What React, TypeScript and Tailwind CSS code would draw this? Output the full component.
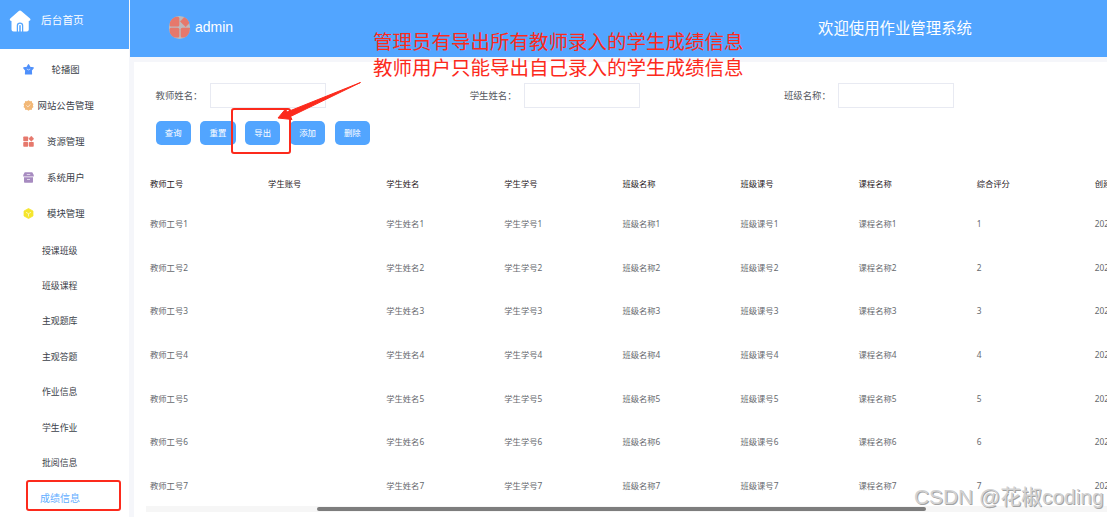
import { type FC, type ReactNode } from 'react';

const columns = ['教师工号', '学生账号', '学生姓名', '学生学号', '班级名称', '班级课号', '课程名称', '综合评分', '创建时间'];

const rows = [1, 2, 3, 4, 5, 6, 7];

const subMenus = ['授课班级', '班级课程', '主观题库', '主观答题', '作业信息', '学生作业', '批阅信息'];

const StarIcon: FC = () => (
  <svg viewBox="0 0 22 22" className="w-[11px] h-[11px]">
    <path d="M11 1.5l3 5 6.5 1.3-4 5 .5 7H5l.5-7-4-5L8 6.5z" fill="#4f90fb" stroke="#4f90fb" strokeWidth="2.5" strokeLinejoin="round" />
    <path d="M7.5 10q3.5 3.500 7 0" fill="none" stroke="#fff" strokeOpacity=".8" strokeWidth="1.5" />
  </svg>
);

const BadgeIcon: FC = () => (
  <svg viewBox="0 0 22 22" className="w-[11px] h-[11px]">
    <path d="M11 .5l3 2 3.5-.3.8 3.5 2.700 2.200L19.700 11l1.300 3.200-2.800 2.100-.8 3.500-3.500-.3-2.900 2-2.900-2-3.500.3-.8-3.500L1 14.200 2.300 11 1 7.900l2.700-2.200.8-3.500 3.500.3z" fill="#f2b877" />
    <path d="M6.800 10.800l3 3 5.200-5.200" fill="none" stroke="#fff" strokeOpacity=".8" strokeWidth="1.6" />
  </svg>
);

const GridIcon: FC<{ className?: string }> = ({ className = 'w-[11px] h-[11px]' }) => (
  <svg viewBox="0 0 22 22" className={className} fill="#e6786c">
    <rect x="0.5" y="0.8" width="9.8" height="9.6" rx="1.5" />
    <rect x="0.5" y="11.8" width="9.8" height="9.6" rx="1.5" />
    <rect x="11.7" y="11.8" width="9.8" height="9.6" rx="1.5" />
    <path d="M16.6 0l5.2 5.4-5.2 5.4-5.2-5.4z" stroke="#e6786c" strokeWidth=".6" strokeLinejoin="round" />
  </svg>
);

const BoxIcon: FC = () => (
  <svg viewBox="0 0 22 22" className="w-[11px] h-[11px]">
    <path d="M3.5.5h15L21.5 6v3H.5V6z" fill="#a78bc0" />
    <path d="M2 10.3h18V20q0 1.5-1.5 1.5h-15Q2 21.5 2 20z" fill="#a78bc0" />
    <path d="M7.5 5h7M8 15h6" stroke="#fff" strokeOpacity=".85" strokeWidth="1.5" />
  </svg>
);

const CubeIcon: FC = () => (
  <svg viewBox="0 0 22 22" className="w-[11px] h-[11px]">
    <path d="M11 1l9 5v10l-9 5-9-5V6z" fill="#f5e62d" stroke="#f5e62d" strokeWidth="1.5" strokeLinejoin="round" />
    <path d="M6 8.5l5 3 5-3M11 11.5V17" fill="none" stroke="#fff" strokeOpacity=".8" strokeWidth="1.5" />
  </svg>
);

const MenuItem: FC<{ icon: ReactNode; label: string; gap: string }> = ({ icon, label, gap }) => (
  <div className={`h-9 pl-[23px] flex items-center text-[9.4px] text-[#3b4149] ${gap}`}>
    {icon}
    <span>{label}</span>
  </div>
);

const Field: FC<{ label: string }> = ({ label }) => (
  <div className="w-[314.2px] shrink-0 flex items-center">
    <span className="w-[54.5px] text-[9.4px] text-[#55585e]">{label}：</span>
    <input className="w-[116px] h-[25px] border border-[#e8eaf2] bg-white outline-none" />
  </div>
);

const cellText = (col: string, n: number) => {
  if (col === '学生账号') return '';
  if (col === '综合评分') return `${n}`;
  if (col === '创建时间') return '2024-01-01';
  return `${col}${n}`;
};

export default function App() {
  return (
    <div className="relative w-[1107px] h-[517px] flex overflow-hidden bg-[#f5f6fa] whitespace-nowrap font-['Noto_Sans_CJK_SC',sans-serif]">

      {/* Sidebar */}
      <aside className="w-[129px] shrink-0 bg-white">
        <div className="h-[49px] bg-[#52a5ff] pl-[9px] pb-[8px] flex items-center gap-[10px] text-[10.7px] text-white">
          <svg viewBox="0 0 44 44" className="w-[22px] h-[22px]" fill="#fff">
            <path d="M22 1q1.5 0 3 1.3l17 14.9q2 2 .2 3.8-1 .8-2.7.8V39q0 4-4 4H28.5V31q0-6-6.5-6t-6.5 6v12H9q-4 0-4-4V21.800q-1.700 0-2.700-.8-1.800-1.800.2-3.800L19 2.300Q20.500 1 22 1z" />
            <path d="M18 43V31.5q0-4 4-4t4 4V43h-2.500V31.500q0-1.500-1.500-1.500t-1.500 1.500V43z" />
          </svg>
          <span>后台首页</span>
        </div>

        <nav className="pt-[2px]">
          <MenuItem icon={<StarIcon />} label="轮播图" gap="gap-[17.5px]" />
          <MenuItem icon={<BadgeIcon />} label="网站公告管理" gap="gap-[3.5px]" />
          <MenuItem icon={<GridIcon />} label="资源管理" gap="gap-[13px]" />
          <MenuItem icon={<BoxIcon />} label="系统用户" gap="gap-[13px]" />
          <MenuItem icon={<CubeIcon />} label="模块管理" gap="gap-[13px]" />

          <div className="pt-[1.6px]">
            {subMenus.map((name) => (
              <div key={name} className="h-[35.4px] pl-[42px] flex items-center text-[8.9px] text-[#3b4149]">
                {name}
              </div>
            ))}
            <div className="h-[34px] pl-[40px] flex items-center text-[10px] text-[#62adff]">
              成绩信息
            </div>
          </div>
        </nav>
      </aside>

      <div className="flex-1 min-w-0 pl-px flex flex-col">

        {/* Header */}
        <header className="h-[57px] shrink-0 bg-[#52a5ff] pl-[39px] pb-[3px] flex items-center text-white">
          <div className="w-[21px] h-[23px] rounded-full bg-[#bdb9bd] overflow-hidden flex items-center justify-center">
            <GridIcon className="w-[22px] h-[22px] shrink-0" />
          </div>
          <span className="ml-[5px] w-[623px] text-[14px] font-['Liberation_Sans',sans-serif]">admin</span>
          <span className="pt-[1px] text-[15.4px]">欢迎使用作业管理系统</span>
        </header>

        {/* Content */}
        <main className="flex-1 min-h-0 mt-[5px] ml-[4px] bg-white overflow-hidden">
          <div className="pt-[21px] pl-[21.5px] flex">
            <Field label="教师姓名" />
            <Field label="学生姓名" />
            <Field label="班级名称" />
          </div>

          <div className="mt-[13px] pl-[21.5px] flex gap-[9.5px]">
            {['查询', '重置', '导出', '添加', '删除'].map((name) => (
              <button key={name} className="w-[35.3px] h-[24px] pb-px rounded-[5px] bg-[#52a5ff] text-white text-[8.4px]">
                {name}
              </button>
            ))}
          </div>

          <div className="mt-[21.2px] pl-[16px] text-[8.3px] font-['Noto_Sans','Noto_Sans_CJK_SC',sans-serif]">
            <div className="h-[37px] flex items-center text-[#1f2023]">
              {columns.map((col) => (
                <span key={col} className="w-[118.1px] shrink-0">{col}</span>
              ))}
            </div>
            {rows.map((n) => (
              <div key={n} className="h-[43.7px] pb-[2px] flex items-center text-[#66696e]">
                {columns.map((col) => (
                  <span key={col} className="w-[118.1px] shrink-0">{cellText(col, n)}</span>
                ))}
              </div>
            ))}
          </div>
        </main>
      </div>

      {/* Horizontal scrollbar of the table */}
      <div className="absolute left-[146px] right-0 top-[506px] h-[6px] bg-[#f6f6f6]">
        <div className="ml-[171px] mt-px w-[609px] h-[4px] rounded-full bg-[#7d7d7d]" />
      </div>

      {/* Annotations */}
      <div className="absolute left-[373px] top-[28px] text-[19.5px] leading-[25.5px] text-[#fc2a1c]">
        <p>管理员有导出所有教师录入的学生成绩信息</p>
        <p>教师用户只能导出自己录入的学生成绩信息</p>
      </div>
      <div className="absolute left-[231px] top-[108px] w-[60px] h-[46px] rounded-[3px] border-2 border-[#fc2a1c]" />
      <div className="absolute left-[26px] top-[480px] w-[95px] h-[31px] rounded-[3px] border-2 border-[#fc2a1c]" />
      <svg viewBox="0 0 90 45" className="absolute left-[275px] top-[78px] w-[90px] h-[45px]">
        <path d="M3 40L10.500 31l1.500 3L85.500 4.500 15.500 38.500l1.500 3z" fill="#fc2a1c" stroke="#fc2a1c" strokeWidth="1" strokeLinejoin="round" />
      </svg>

      <div className="absolute left-[914px] top-[484px] text-[20.9px] leading-[26px] text-[#d2d2d2] [text-shadow:1px_1px_0_#a3a3a3] font-['Liberation_Sans','Noto_Sans_CJK_SC',sans-serif]">
        CSDN @花椒coding
      </div>
    </div>
  );
}
